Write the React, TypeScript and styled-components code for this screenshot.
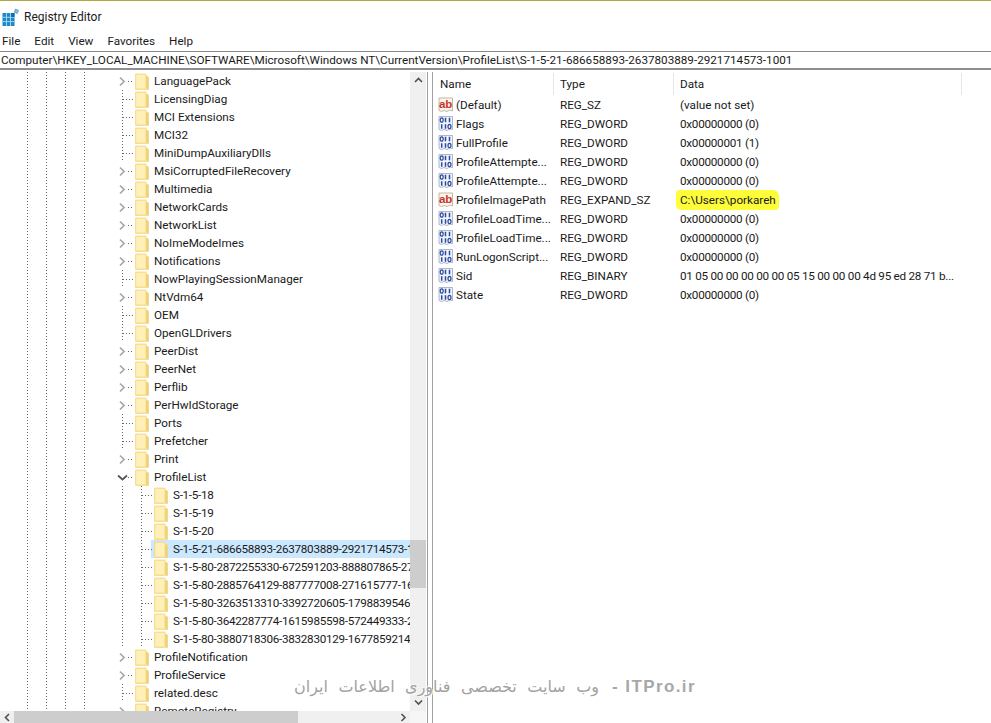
import React from "react";
import styled, { createGlobalStyle } from "styled-components";

const UI_FONT = `Roboto, "Noto Sans", sans-serif`;

const GlobalStyle = createGlobalStyle`
  html, body {
    margin: 0;
    padding: 0;
    height: 100%;
    background: #fff;
    overflow: hidden;
  }
  #root {
    height: 100%;
  }
`;

const Window = styled.div`
  position: relative;
  width: 991px;
  height: 723px;
  display: flex;
  flex-direction: column;
  overflow: hidden;
  border-top: 1px solid #b5a83f;
  box-sizing: border-box;
  font-family: ${UI_FONT};
  font-size: 11.7px;
  color: #1a1a1a;
  background: #fff;
`;

const TitleBar = styled.div`
  height: 29px;
  flex: none;
  display: flex;
  align-items: center;
  gap: 4px;
  padding: 2px 0 0 2px;
  box-sizing: border-box;
`;

const TitleText = styled.span`
  font-size: 12px;
`;

const MenuBar = styled.div`
  height: 21px;
  flex: none;
  display: flex;
  align-items: center;
  gap: 14px;
  padding-left: 2px;
`;

const AddressBar = styled.div`
  height: 19px;
  flex: none;
  display: flex;
  align-items: center;
  padding-left: 1px;
  box-sizing: border-box;
  border-top: 1px solid #8a8a8a;
  border-bottom: 2px solid #8f8f8f;
  white-space: nowrap;
`;

const Panes = styled.div`
  flex: 1;
  min-height: 0;
  display: flex;
  padding-top: 2px;
`;

const TreePane = styled.div`
  width: 427px;
  flex: none;
  display: grid;
  grid-template-columns: 410px 16px;
  grid-template-rows: 1fr 12px;
  border-right: 1px solid #a0a0a0;
  min-height: 0;
`;

const TreeList = styled.div`
  overflow: hidden;
  min-width: 0;
  min-height: 0;
`;

const Row = styled.div`
  display: flex;
  height: 18px;
  padding-left: 18px;
  white-space: nowrap;
`;

const dotted =
  "repeating-linear-gradient(to bottom, #666 0 1px, transparent 1px 3px) 9px 0 / 1px 100% no-repeat";

const Guide = styled.span<{ $line?: boolean }>`
  position: relative;
  width: 19px;
  flex: none;
  display: flex;
  align-items: center;
  justify-content: center;
  background: ${({ $line }) => ($line ? dotted : "none")};
`;

const Stub = styled.span<{ $wide?: boolean }>`
  position: absolute;
  top: 9px;
  left: ${({ $wide }) => ($wide ? "10px" : "15px")};
  width: ${({ $wide }) => ($wide ? "11px" : "6px")};
  height: 1px;
  background: repeating-linear-gradient(to right, #666 0 1px, transparent 1px 3px);
`;

const FolderBox = styled.span<{ $selected?: boolean }>`
  width: 21px;
  flex: none;
  display: flex;
  align-items: center;
  padding-left: 3px;
  box-sizing: border-box;
  background: ${({ $selected }) => ($selected ? "#cce8ff" : "transparent")};
`;

const Label = styled.span<{ $selected?: boolean; $digits?: boolean }>`
  flex: 1;
  min-width: 0;
  line-height: 18px;
  padding-left: 1px;
  overflow: hidden;
  letter-spacing: ${({ $digits }) => ($digits ? "-0.3px" : "normal")};
  background: ${({ $selected }) => ($selected ? "#cce8ff" : "transparent")};
`;

const VTrack = styled.div`
  background: #f0f0f0;
  display: flex;
  flex-direction: column;
  align-items: stretch;
`;

const ScrollArrow = styled.div`
  height: 17px;
  flex: none;
  display: flex;
  align-items: center;
  justify-content: center;
`;

const VSpace = styled.div<{ $size: number }>`
  flex: ${({ $size }) => $size};
`;

const VThumb = styled.div`
  height: 48px;
  flex: none;
  background: #cdcdcd;
`;

const HTrack = styled.div`
  display: flex;
  align-items: center;
  background: #f0f0f0;
`;

const HArrow = styled.div`
  width: 14px;
  flex: none;
  display: flex;
  justify-content: center;
  align-items: center;
`;

const HThumb = styled.div`
  width: 284px;
  height: 100%;
  flex: none;
  background: #cdcdcd;
`;

const HSpace = styled.div`
  flex: 1;
`;

const Corner = styled.div`
  background: #f6f6f6;
`;

const Splitter = styled.div`
  width: 4px;
  flex: none;
`;

const ListPane = styled.div`
  flex: 1;
  min-width: 0;
  border-left: 1px solid #a0a0a0;
  padding-left: 1px;
`;

const ListHeader = styled.div`
  display: grid;
  grid-template-columns: 120px 120px 288px;
  height: 22px;
  margin-top: 1px;
`;

const HeaderCell = styled.div`
  padding-left: 6px;
  line-height: 22px;
  border-right: 1px solid #e5e5e5;
`;

const ListRow = styled.div`
  display: grid;
  grid-template-columns: 120px 120px 288px;
  height: 19px;
  align-items: center;
  white-space: nowrap;
`;

const NameCell = styled.div`
  display: flex;
  align-items: center;
  gap: 2px;
  padding-left: 4px;

  svg {
    flex: none;
  }
`;

const Cell = styled.div<{ $digits?: boolean }>`
  padding-left: 6px;
  min-width: 0;
  letter-spacing: ${({ $digits }) => ($digits ? "-0.26px" : "normal")};
`;

const Marker = styled.span`
  display: inline-block;
  margin: -3px 0 -3px -4px;
  padding: 3px 3px 3px 4px;
  background: #fdfd3a;
  border-radius: 3px 6px 4px 5px;
`;

const Watermark = styled.div`
  position: absolute;
  left: 294px;
  top: 674px;
  width: 402px;
  display: flex;
  flex-direction: row-reverse;
  align-items: center;
  justify-content: space-between;
  white-space: nowrap;
  font-family: "DejaVu Sans", sans-serif;
  font-size: 16px;
  line-height: 24px;
  color: #a2a2a2;
  text-shadow: 1px 1px 0 rgba(255, 255, 255, 0.9), -1px -1px 0 rgba(255, 255, 255, 0.6);
`;

const WatermarkBrand = styled.span`
  font-family: "Liberation Sans", sans-serif;
  font-size: 17px;
  font-weight: 700;
  letter-spacing: 1.4px;
  color: #a8a8a8;
`;

const WatermarkText = styled.span`
  direction: rtl;
  word-spacing: 5.4px;
`;

type Dir = "right" | "down" | "up" | "left";

const Chevron = ({ dir }: { dir: Dir }) => {
  const paths: Record<Dir, string> = {
    right: "M3 1.5 7 5.5 3 9.5",
    down: "M1 3.5 5.5 7.5 10 3.5",
    up: "M1 7.5 5.5 3.5 10 7.5",
    left: "M7 1.5 3 5.5 7 9.5",
  };
  return (
    <svg width="11" height="11" viewBox="0 0 11 11" fill="none">
      <path d={paths[dir]} stroke={dir === "down" ? "#555" : "#a6a6a6"} strokeWidth="1.7" />
    </svg>
  );
};

const ScrollChevron = ({ dir }: { dir: Dir }) => {
  const paths: Record<Dir, string> = {
    right: "M2.5 1 6 4.5 2.5 8",
    left: "M6 1 2.5 4.5 6 8",
    up: "M1 6 4.5 2.5 8 6",
    down: "M1 2.5 4.5 6 8 2.5",
  };
  return (
    <svg width="9" height="9" viewBox="0 0 9 9" fill="none">
      <path d={paths[dir]} stroke="#505050" strokeWidth="1.6" />
    </svg>
  );
};

const FolderIcon = () => (
  <svg width="14" height="17" viewBox="0 0 14 17">
    <path d="M0.5 1h10.5v1.5l2.5 1.5v12.5H0.5z" fill="#fde797" stroke="#f0d488" strokeWidth="0.7" />
    <path d="M11 3v12.5l2.5 1V4z" fill="#f0d27c" />
    <path d="M1.5 2h8.5v13H1.5z" fill="#ffefb8" />
  </svg>
);

const AppIcon = () => (
  <svg width="18" height="20" viewBox="0 0 18 20">
    <rect x="0.5" y="6" width="12" height="13" fill="#1e88c9" />
    <path d="M4.5 6v13M8.5 6v13M0.5 10.3h12M0.5 14.6h12" stroke="#9fd4ee" strokeWidth="1" />
    <rect x="9" y="6" width="3.5" height="4" fill="#0b6fb0" />
    <path d="M13.5 2l3 1.5-1.2 3-3-1.3z" fill="#7fc4e4" stroke="#3a7fa5" strokeWidth="0.6" />
  </svg>
);

const StringIcon = () => (
  <svg width="16" height="17" viewBox="0 0 16 17">
    <path d="M1 2h13.5v13L12 14l-3 1.5-3-1-2.5 1L1 14.5z" fill="#fbf6ee" stroke="#bfae9b" strokeWidth="0.9" />
    <text
      x="7.6"
      y="11.5"
      fontFamily="Liberation Sans, sans-serif"
      fontWeight="700"
      fontSize="11.5"
      fill="#c8352b"
      textAnchor="middle"
    >
      ab
    </text>
  </svg>
);

const BinaryIcon = () => (
  <svg width="16" height="17" viewBox="0 0 16 17">
    <path d="M1 1.5h13.5v13.2L12 14l-3 1.5-3-1-2.5 1L1 14.5z" fill="#f1f4fb" stroke="#9aa6c4" strokeWidth="0.8" />
    <ellipse cx="3.7" cy="5" rx="1.5" ry="2.2" fill="none" stroke="#2b4a9b" strokeWidth="1.2" />
    <path d="M7.5 2.7v4.6M11.5 2.7v4.6M3.7 9.2v4.6M7.5 9.2v4.6" stroke="#2b4a9b" strokeWidth="1.5" />
    <ellipse cx="11.5" cy="11.5" rx="1.5" ry="2.2" fill="none" stroke="#2b4a9b" strokeWidth="1.2" />
  </svg>
);

type TreeItem = {
  name: string;
  arrow?: "right" | "down";
  child?: boolean;
  selected?: boolean;
};

const treeItems: TreeItem[] = [
  { name: "LanguagePack", arrow: "right" },
  { name: "LicensingDiag" },
  { name: "MCI Extensions" },
  { name: "MCI32" },
  { name: "MiniDumpAuxiliaryDlls" },
  { name: "MsiCorruptedFileRecovery", arrow: "right" },
  { name: "Multimedia", arrow: "right" },
  { name: "NetworkCards", arrow: "right" },
  { name: "NetworkList", arrow: "right" },
  { name: "NoImeModeImes", arrow: "right" },
  { name: "Notifications", arrow: "right" },
  { name: "NowPlayingSessionManager" },
  { name: "NtVdm64", arrow: "right" },
  { name: "OEM" },
  { name: "OpenGLDrivers" },
  { name: "PeerDist", arrow: "right" },
  { name: "PeerNet", arrow: "right" },
  { name: "Perflib", arrow: "right" },
  { name: "PerHwIdStorage", arrow: "right" },
  { name: "Ports" },
  { name: "Prefetcher" },
  { name: "Print", arrow: "right" },
  { name: "ProfileList", arrow: "down" },
  { name: "S-1-5-18", child: true },
  { name: "S-1-5-19", child: true },
  { name: "S-1-5-20", child: true },
  { name: "S-1-5-21-686658893-2637803889-2921714573-1001", child: true, selected: true },
  { name: "S-1-5-80-2872255330-672591203-888807865-2791174282-1", child: true },
  { name: "S-1-5-80-2885764129-887777008-271615777-1616004480-2", child: true },
  { name: "S-1-5-80-3263513310-3392720605-1798839546-683002060-3", child: true },
  { name: "S-1-5-80-3642287774-1615985598-572449333-2071089441-1", child: true },
  { name: "S-1-5-80-3880718306-3832830129-1677859214-2598158968-1", child: true },
  { name: "ProfileNotification", arrow: "right" },
  { name: "ProfileService", arrow: "right" },
  { name: "related.desc" },
  { name: "RemoteRegistry", arrow: "right" },
];

type ValueItem = {
  name: string;
  type: string;
  data: string;
  text?: boolean;
  marked?: boolean;
};

const dword = (v: string, n: number) => `0x0000000${v} (${n})`;

const values: ValueItem[] = [
  { name: "(Default)", type: "REG_SZ", data: "(value not set)", text: true },
  { name: "Flags", type: "REG_DWORD", data: dword("0", 0) },
  { name: "FullProfile", type: "REG_DWORD", data: dword("1", 1) },
  { name: "ProfileAttempte...", type: "REG_DWORD", data: dword("0", 0) },
  { name: "ProfileAttempte...", type: "REG_DWORD", data: dword("0", 0) },
  { name: "ProfileImagePath", type: "REG_EXPAND_SZ", data: "C:\\Users\\porkareh", text: true, marked: true },
  { name: "ProfileLoadTime...", type: "REG_DWORD", data: dword("0", 0) },
  { name: "ProfileLoadTime...", type: "REG_DWORD", data: dword("0", 0) },
  { name: "RunLogonScript...", type: "REG_DWORD", data: dword("0", 0) },
  { name: "Sid", type: "REG_BINARY", data: "01 05 00 00 00 00 00 05 15 00 00 00 4d 95 ed 28 71 b..." },
  { name: "State", type: "REG_DWORD", data: dword("0", 0) },
];

const TreeRow = ({ item }: { item: TreeItem }) => (
  <Row>
    <Guide $line />
    <Guide $line />
    <Guide $line />
    <Guide $line />
    <Guide />
    {item.child ? (
      <>
        <Guide $line />
        <Guide $line>
          <Stub $wide />
        </Guide>
      </>
    ) : (
      <Guide $line={!item.arrow}>
        {item.arrow && <Chevron dir={item.arrow} />}
        <Stub $wide={!item.arrow} />
      </Guide>
    )}
    <FolderBox $selected={item.selected}>
      <FolderIcon />
    </FolderBox>
    <Label $selected={item.selected} $digits={item.child}>
      {item.name}
    </Label>
  </Row>
);

export default function App() {
  return (
    <>
      <GlobalStyle />
      <Window>
        <TitleBar>
          <AppIcon />
          <TitleText>Registry Editor</TitleText>
        </TitleBar>
        <MenuBar>
          <span>File</span>
          <span>Edit</span>
          <span>View</span>
          <span>Favorites</span>
          <span>Help</span>
        </MenuBar>
        <AddressBar>
          Computer\HKEY_LOCAL_MACHINE\SOFTWARE\Microsoft\Windows NT\CurrentVersion\ProfileList\S-1-5-21-686658893-2637803889-2921714573-1001
        </AddressBar>
        <Panes>
          <TreePane>
            <TreeList>
              {treeItems.map((item) => (
                <TreeRow key={item.name} item={item} />
              ))}
            </TreeList>
            <VTrack>
              <ScrollArrow>
                <ScrollChevron dir="up" />
              </ScrollArrow>
              <VSpace $size={451} />
              <VThumb />
              <VSpace $size={106} />
              <ScrollArrow>
                <ScrollChevron dir="down" />
              </ScrollArrow>
            </VTrack>
            <HTrack>
              <HArrow>
                <ScrollChevron dir="left" />
              </HArrow>
              <HThumb />
              <HSpace />
              <HArrow>
                <ScrollChevron dir="right" />
              </HArrow>
            </HTrack>
            <Corner />
          </TreePane>
          <Splitter />
          <ListPane>
            <ListHeader>
              <HeaderCell>Name</HeaderCell>
              <HeaderCell>Type</HeaderCell>
              <HeaderCell>Data</HeaderCell>
            </ListHeader>
            {values.map((v, i) => (
              <ListRow key={`${v.name}-${i}`}>
                <NameCell>
                  {v.text ? <StringIcon /> : <BinaryIcon />}
                  {v.name}
                </NameCell>
                <Cell>{v.type}</Cell>
                <Cell $digits={!v.text}>{v.marked ? <Marker>{v.data}</Marker> : v.data}</Cell>
              </ListRow>
            ))}
          </ListPane>
        </Panes>
        <Watermark>
          <WatermarkBrand>- ITPro.ir</WatermarkBrand>
          <WatermarkText>وب سایت تخصصی فناوری اطلاعات ایران</WatermarkText>
        </Watermark>
      </Window>
    </>
  );
}
